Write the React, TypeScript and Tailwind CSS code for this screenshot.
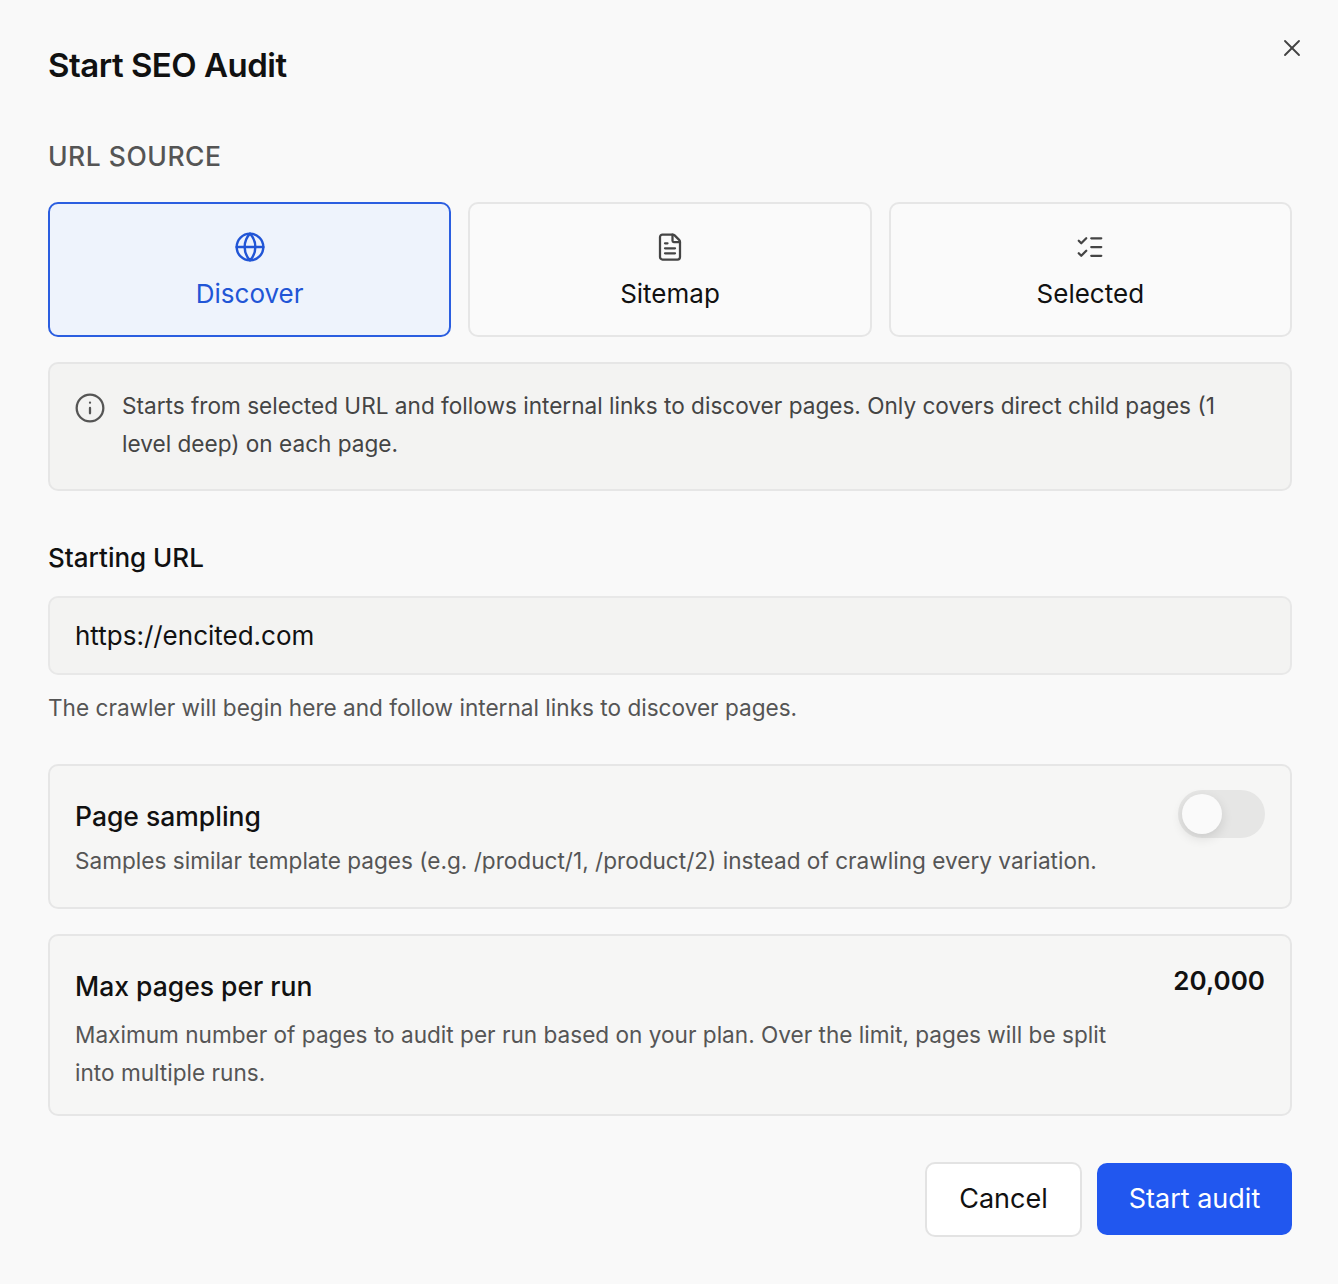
import React from "react";
import { Globe, FileText, ListChecks, Info, X } from "lucide-react";

export default function App() {
  return (
    <div className="min-h-[1284px] w-[1338px] bg-[#f9f9f9] text-[#111] pl-[48px] pr-[46px] pt-[44px] pb-[46px]" style={{ fontFamily: "Inter, 'Noto Sans', sans-serif" }}>
      <div className="flex items-start justify-between">
        <h1 className="text-[33px] font-semibold tracking-[-0.5px] leading-[42px]">Start SEO Audit</h1>
        <X className="w-[28px] h-[28px] text-[#444] mr-[-14px] mt-[-10px]" strokeWidth={1.6} />
      </div>
      <div className="mt-[54px] text-[26.5px] font-medium text-[#555] tracking-[0.5px] leading-[32px]">URL SOURCE</div>
      <div className="mt-[30px] grid grid-cols-3 gap-[17px]">
        <div className="h-[135px] rounded-[10px] border-2 border-[#2b5ee0] bg-[#eef3fc] flex flex-col items-center justify-center gap-[16px] text-[#2155d6]">
          <Globe className="w-[32px] h-[32px]" strokeWidth={1.8} />
          <span className="text-[26px] leading-[30px]">Discover</span>
        </div>
        <div className="h-[135px] rounded-[10px] border-2 border-[#e6e6e6] bg-[#fafafa] flex flex-col items-center justify-center gap-[16px]">
          <FileText className="w-[30px] h-[32px] text-[#444]" strokeWidth={1.8} />
          <span className="text-[26px] leading-[30px]">Sitemap</span>
        </div>
        <div className="h-[135px] rounded-[10px] border-2 border-[#e6e6e6] bg-[#fafafa] flex flex-col items-center justify-center gap-[16px]">
          <ListChecks className="w-[30px] h-[32px] text-[#444]" strokeWidth={1.8} />
          <span className="text-[26px] leading-[30px]">Selected</span>
        </div>
      </div>
      <div className="mt-[25px] rounded-[10px] border-2 border-[#e6e6e6] bg-[#f3f3f2] px-[24px] py-[26px] flex gap-[16px]">
        <Info className="w-[32px] h-[32px] text-[#555] shrink-0 mt-[2px]" strokeWidth={1.7} />
        <p className="text-[22.6px] leading-[38px] text-[#444] mt-[-3px] max-w-[1100px]">Starts from selected URL and follows internal links to discover pages. Only covers direct child pages (1 level deep) on each page.</p>
      </div>
      <div className="mt-[50px] text-[26px] leading-[34px] font-medium">Starting URL</div>
      <div className="mt-[21px] h-[79px] rounded-[10px] border-2 border-[#e8e8e8] bg-[#f3f3f2] px-[25px] flex items-center text-[26px]">https://encited.com</div>
      <p className="mt-[18px] text-[22.6px] leading-[30px] text-[#555]">The crawler will begin here and follow internal links to discover pages.</p>
      <div className="mt-[41px] h-[145px] rounded-[10px] border-2 border-[#e6e6e6] bg-[#f6f6f5] px-[25px] flex items-start justify-between">
        <div className="pt-[32px]">
          <div className="text-[26.5px] leading-[36px] font-medium">Page sampling</div>
          <p className="mt-[12px] text-[22.6px] leading-[30px] text-[#555]">Samples similar template pages (e.g. /product/1, /product/2) instead of crawling every variation.</p>
        </div>
        <div className="mt-[24px] w-[87px] h-[48px] rounded-full bg-[#e6e6e5] p-[4px] shrink-0">
          <div className="w-[40px] h-[40px] rounded-full bg-[#fafafa] shadow-[0_4px_12px_rgba(0,0,0,0.12)]" />
        </div>
      </div>
      <div className="mt-[25px] rounded-[10px] border-2 border-[#e6e6e6] bg-[#f6f6f5] px-[25px] pt-[32px] pb-[22px] flex items-start justify-between gap-[30px]">
        <div>
          <div className="text-[26.5px] leading-[36px] font-medium">Max pages per run</div>
          <p className="mt-[12px] text-[22.6px] leading-[38px] text-[#555] max-w-[1080px]">Maximum number of pages to audit per run based on your plan. Over the limit, pages will be split into multiple runs.</p>
        </div>
        <div className="text-[26px] font-semibold leading-[34px] mt-[-4px]">20,000</div>
      </div>
      <div className="mt-[46px] flex justify-end gap-[15px]">
        <button className="h-[75px] w-[157px] rounded-[10px] border-2 border-[#e3e3e3] bg-white text-[27px]">Cancel</button>
        <button className="h-[72px] w-[195px] rounded-[10px] bg-[#2157ef] text-white text-[27px] mt-[1px]">Start audit</button>
      </div>
    </div>
  );
}
